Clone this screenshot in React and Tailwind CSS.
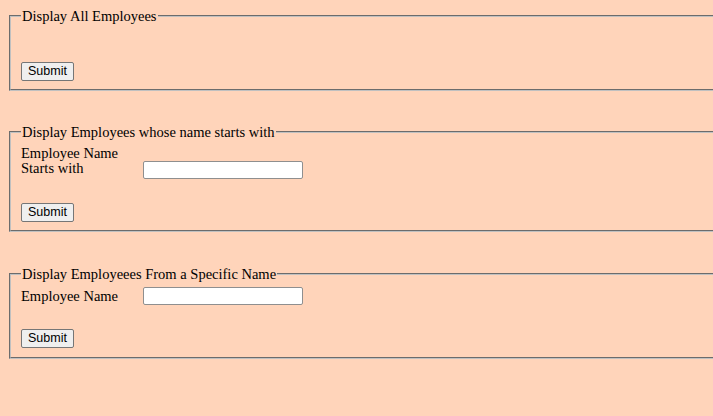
import React from 'react';

function SubmitButton() {
  return (
    <button
      type="button"
      className="px-[6px] py-[1px] text-[12.5px] leading-[15px] text-black bg-[#efefef] border border-[#767676] rounded-[2px] [font-family:Arial,'Liberation_Sans',sans-serif]"
    >
      Submit
    </button>
  );
}

function TextBox({ className = '' }) {
  return (
    <input
      type="text"
      className={`w-[160px] h-[18px] bg-white border border-[#8f8f8f] rounded-[2px] px-[2px] text-[13px] ${className}`}
    />
  );
}

function Box({ title, bottom, children }) {
  return (
    <fieldset className={`mx-[2px] w-[740px] border-2 [border-style:groove] border-[#c0c0c0] px-[10px] pt-[4px] ${bottom}`}>
      <legend className="px-[1px] text-[14.5px] leading-[16px]">{title}</legend>
      {children}
    </fieldset>
  );
}

export default function App() {
  return (
    <div className="min-h-[416px] w-[713px] overflow-hidden bg-[#ffd4ba] px-[7px] pt-[8px] text-[14.5px] text-black [font-family:'Liberation_Serif','Times_New_Roman',serif]">
      {/* all employees */}
      <Box title="Display All Employees" bottom="pb-[7px]">
        <div className="h-[32px]" />
        <SubmitButton />
      </Box>

      <div className="h-[33px]" />

      {/* name starts with */}
      <Box title="Display Employees whose name starts with" bottom="pb-[7px]">
        <div className="mt-[2px] flex items-end">
          <div className="w-[122px] leading-[15px]">
            Employee Name
            <br />
            Starts with
          </div>
          <TextBox className="mb-[-3px]" />
        </div>
        <div className="h-[25px]" />
        <SubmitButton />
      </Box>

      <div className="h-[34px]" />

      {/* from a specific name */}
      <Box title="Display Employeees From a Specific Name" bottom="pb-[9px]">
        <div className="mt-[1px] flex items-center">
          <div className="w-[122px] leading-[16px]">Employee Name</div>
          <TextBox />
        </div>
        <div className="h-[22px]" />
        <SubmitButton />
      </Box>
    </div>
  );
}
